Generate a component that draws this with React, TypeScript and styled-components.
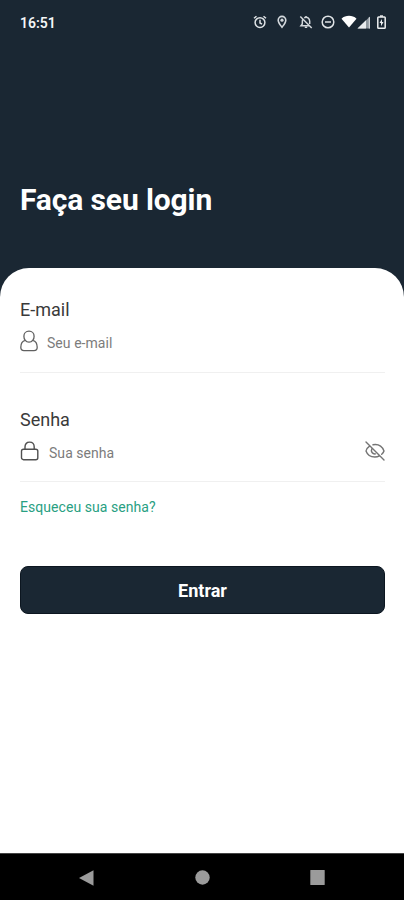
import React from 'react';
import styled, { createGlobalStyle } from 'styled-components';

const GlobalStyle = createGlobalStyle`
  * { box-sizing: border-box; }
  body { margin: 0; font-family: Roboto, "Liberation Sans", sans-serif; background: #1a2733; }
`;

const Screen = styled.div`
  width: 404px;
  height: 900px;
  display: flex;
  flex-direction: column;
  background: #1a2733;
  overflow: hidden;
`;

const StatusBar = styled.header`
  height: 44px;
  padding: 0 18px 0 20px;
  display: flex;
  align-items: center;
  justify-content: space-between;
  color: #f4f6f7;
`;

const Clock = styled.span`
  padding-top: 1px;
  font-size: 14px;
  font-weight: 600;
  line-height: 20px;
`;

const StatusIcons = styled.div`
  display: flex;
  align-items: center;
`;

const Glyph = styled.svg<{ $gap?: number }>`
  display: block;
  flex: none;
  margin-left: ${({ $gap = 0 }) => $gap}px;
`;

const Hero = styled.div`
  height: 224px;
  padding: 138px 20px 0;
`;

const Title = styled.h1`
  margin: 0;
  color: #fff;
  font-size: 30px;
  font-weight: 700;
  line-height: 36px;
  letter-spacing: -0.12px;
  white-space: nowrap;
`;

const Panel = styled.main`
  flex: 1;
  padding: 30px 19px 0 20px;
  background: #fff;
  border-radius: 29px 29px 0 0;
`;

const Field = styled.section<{ $height: number }>`
  height: ${({ $height }) => $height}px;
`;

const Label = styled.label`
  display: block;
  color: #3a3a3a;
  font-size: 18px;
  font-weight: 400;
  line-height: 24px;
`;

const InputRow = styled.div<{ $gap: number; $height: number }>`
  height: ${({ $height }) => $height}px;
  padding-bottom: 12px;
  display: flex;
  align-items: center;
  gap: ${({ $gap }) => $gap}px;
  border-bottom: 1px solid #f0f0f0;
`;

const Input = styled.input`
  flex: 1;
  min-width: 0;
  height: 24px;
  padding: 4px 0 0;
  border: 0;
  outline: 0;
  background: transparent;
  color: #333;
  font: 400 14px/20px Roboto, sans-serif;
  letter-spacing: 0.05px;
  &::placeholder { color: #7c7c7c; opacity: 1; }
`;

const RevealButton = styled.button`
  display: block;
  padding: 0;
  border: 0;
  background: none;
`;

const ForgotLink = styled.a`
  display: block;
  height: 20px;
  margin-bottom: 49px;
  color: #29a082;
  font-size: 14px;
  line-height: 20px;
  letter-spacing: 0.06px;
`;

const Submit = styled.button`
  display: block;
  width: 100%;
  height: 48px;
  padding: 2px 0 0;
  border: 1px solid #0c1620;
  border-radius: 8px;
  background: #1a2733;
  color: #fff;
  font: 700 18px/24px Roboto, sans-serif;
`;

const NavBar = styled.nav`
  height: 47px;
  padding: 1px 79px 0;
  display: flex;
  align-items: center;
  justify-content: space-between;
  background: #000;
  border-top: 1px solid #444;
`;

const AlarmIcon = () => (
  <Glyph width="14" height="14" viewBox="0 0 14 14" fill="none" stroke="#dfe3e6" strokeWidth="1.5">
    <circle cx="7" cy="7.6" r="4.9" />
    <path d="M1 3.3 3.5 1.2M13 3.3l-2.5-2.1M7 4.8V8l2 1.2" />
  </Glyph>
);

const PinIcon = () => (
  <Glyph $gap={10} width="10" height="14" viewBox="0 0 10 14" fill="none" stroke="#d3d8dc" strokeWidth="1.6">
    <path d="M5 12.2C3.3 10 1.2 7.7 1.2 5.2a3.8 3.8 0 0 1 7.6 0C8.8 7.7 6.7 10 5 12.2Z" />
    <circle cx="5" cy="5.2" r="1.6" fill="#d3d8dc" stroke="none" />
  </Glyph>
);

const MutedBellIcon = () => (
  <Glyph $gap={12} width="14" height="14" viewBox="0 0 14 14" fill="none" stroke="#d3d8dc" strokeWidth="1.5">
    <path d="M1.3 1.5l11.4 11.5M3.8 4.2C3.2 5.3 3.3 7 3.3 9L2 10.7h8.3M5.2 2.8C8.2 1.4 10.7 3.5 10.7 6.3V9" />
    <path d="M7 1v1.5M5.8 12.2h2.4" />
  </Glyph>
);

const DoNotDisturbIcon = () => (
  <Glyph $gap={8} width="14" height="14" viewBox="0 0 14 14" fill="none" stroke="#dfe3e6" strokeWidth="1.5">
    <circle cx="7" cy="7" r="5.8" />
    <path d="M4 7h6" />
  </Glyph>
);

const WifiIcon = () => (
  <Glyph $gap={6} width="16" height="14" viewBox="0 0 16 14">
    <path d="M.5 3.7C4.6-.1 11.4-.1 15.5 3.7L8 12.6Z" fill="#fff" />
  </Glyph>
);

const SignalIcon = () => (
  <Glyph width="14" height="13" viewBox="0 0 14 13">
    <path d="M.5 12.5 13 .5v12Z" fill="#8f989f" />
    <path d="M.5 12.5 9 4.3v8.2Z" fill="#e9ecee" />
    <path d="M12.3 1.2v11.3" stroke="#dfe3e6" />
  </Glyph>
);

const BatteryIcon = () => (
  <Glyph $gap={6} width="9" height="14" viewBox="0 0 9 14" fill="none">
    <path d="M3 .3h3v1.5H3Z" fill="#eef0f1" />
    <rect x=".8" y="2" width="7.4" height="11.2" rx=".8" stroke="#eef0f1" strokeWidth="1.5" />
    <path d="M5 4 2.5 8H4v3.3L6.5 7H5Z" fill="#eef0f1" />
  </Glyph>
);

const PersonIcon = () => (
  <Glyph width="18" height="22" viewBox="0 0 18 22" fill="none" stroke="#606060" strokeWidth="1.3">
    <path d="M5.2 10.3C4.2 9.3 3.9 8 3.9 6.3 3.9 3.4 5.9 1.2 9 1.2s5.1 2.2 5.1 5.1c0 1.7-.3 3-1.3 4 2.9.8 4.4 3.6 4.4 6.9 0 2.3-1.3 3.4-3.2 3.4H4c-1.9 0-3.2-1.1-3.2-3.4 0-3.3 1.5-6.1 4.4-6.9Z" />
    <path d="M5.2 10.3c1 1.2 2.2 1.8 3.8 1.8s2.8-.6 3.8-1.8" />
  </Glyph>
);

const LockIcon = () => (
  <Glyph width="19" height="20" viewBox="0 0 19 20" fill="none" stroke="#505050" strokeWidth="1.4">
    <rect x="1.5" y="8.3" width="16.3" height="10.4" rx="2" />
    <path d="M5 8.3V6c0-2.9 1.8-4.9 4.6-4.9s4.6 2 4.6 4.9v2.3" />
  </Glyph>
);

const HiddenEyeIcon = () => (
  <Glyph width="20" height="20" viewBox="0 0 20 20" fill="none" stroke="#747474" strokeWidth="1.4" strokeLinecap="round">
    <path d="M1 1l18 18M4.6 5.1C2.7 6.4 1.2 8.4 1 10c1.4 3.9 4.7 6 8.8 6 1.800 0 3.300-.4 4.700-1.200M8 3.800c5-.9 9.100 1.500 11 6.200-.5 1.300-1.300 2.400-2.300 3.300" />
    <path d="M7 7.700c-1.600 2.800.5 5.600 3.500 5.200" />
  </Glyph>
);

export default function App() {
  return (
    <>
      <GlobalStyle />
      <Screen>
        <StatusBar>
          <Clock>16:51</Clock>
          <StatusIcons>
            <AlarmIcon />
            <PinIcon />
            <MutedBellIcon />
            <DoNotDisturbIcon />
            <WifiIcon />
            <SignalIcon />
            <BatteryIcon />
          </StatusIcons>
        </StatusBar>
        <Hero>
          <Title>Faça seu login</Title>
        </Hero>
        <Panel>
          <Field $height={110}>
            <Label htmlFor="email">E-mail</Label>
            <InputRow $gap={9} $height={51}>
              <PersonIcon />
              <Input id="email" type="email" placeholder="Seu e-mail" />
            </InputRow>
          </Field>
          <Field $height={89}>
            <Label htmlFor="password">Senha</Label>
            <InputRow $gap={10} $height={50}>
              <LockIcon />
              <Input id="password" type="password" placeholder="Sua senha" />
              <RevealButton type="button" aria-label="Mostrar senha">
                <HiddenEyeIcon />
              </RevealButton>
            </InputRow>
          </Field>
          <ForgotLink>Esqueceu sua senha?</ForgotLink>
          <Submit type="button">Entrar</Submit>
        </Panel>
        <NavBar>
          <Glyph width="15" height="16" viewBox="0 0 15 16" fill="#9b9b9b">
            <path d="M0 8 14.5.2v15.6Z" />
          </Glyph>
          <Glyph width="15" height="15" viewBox="0 0 15 15" fill="#9b9b9b">
            <circle cx="7.5" cy="7.5" r="7.2" />
          </Glyph>
          <Glyph width="15" height="15" viewBox="0 0 15 15" fill="#9b9b9b">
            <rect x=".3" y="0" width="14.4" height="15" rx=".5" />
          </Glyph>
        </NavBar>
      </Screen>
    </>
  );
}
